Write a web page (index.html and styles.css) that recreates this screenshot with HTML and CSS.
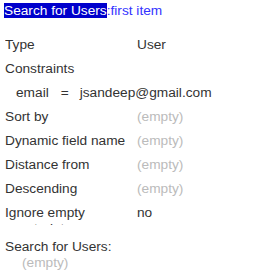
FILE: index.html
```html
<!DOCTYPE html>
<html>

<head>
    <meta charset="UTF-8">
    <title>Search for Users</title>
    <link rel="stylesheet" href="styles.css">
</head>

<body>
    <div class="inspector">
        <div class="title">
            <span class="title-source">Search for Users</span><span class="title-op">:first item</span>
        </div>

        <div class="props">
            <div class="row">
                <div class="label">Type</div>
                <div class="value">User</div>
            </div>
            <div class="row">
                <div class="label">Constraints</div>
            </div>
            <div class="constraint">
                <span class="c-key">email</span>
                <span class="c-op">=</span>
                <span class="c-val">jsandeep@gmail.com</span>
            </div>
            <div class="row">
                <div class="label">Sort by</div>
                <div class="value empty">(empty)</div>
            </div>
            <div class="row">
                <div class="label">Dynamic field name</div>
                <div class="value empty">(empty)</div>
            </div>
            <div class="row">
                <div class="label">Distance from</div>
                <div class="value empty">(empty)</div>
            </div>
            <div class="row">
                <div class="label">Descending</div>
                <div class="value empty">(empty)</div>
            </div>
            <div class="row">
                <div class="label">Ignore empty constraints</div>
                <div class="value">no</div>
            </div>
        </div>

        <div class="result">
            <div class="result-title">Search for Users:</div>
            <div class="result-value empty">(empty)</div>
        </div>
    </div>
</body>

</html>
```

FILE: styles.css
```css
body {
    font-family: "Liberation Sans", Arial, sans-serif;
    font-size: 13.7px;
    color: #333;
    margin: 0;
    padding: 0;
}

.inspector {
    padding: 3px 4px;
}

.title {
    line-height: 16px;
    margin-bottom: 14px;
}

.title-source {
    background-color: #0000cc;
    color: white;
}

.title-op {
    color: #3333ff;
}

.props {
    padding-left: 1px;
}

.row {
    display: flex;
    height: 24px;
    line-height: 16px;
    padding-top: 4px;
    box-sizing: border-box;
    overflow: hidden;
}

.label {
    width: 132px;
    flex-shrink: 0;
}

.constraint {
    display: flex;
    height: 24px;
    line-height: 16px;
    padding-top: 4px;
    padding-left: 11px;
    box-sizing: border-box;
}

.c-op {
    margin: 0 11px 0 12px;
}

.empty {
    color: #bbb;
}

.result {
    margin-top: 14px;
    padding-left: 1px;
    line-height: 16px;
}

.result-value {
    padding-left: 17px;
}
```
